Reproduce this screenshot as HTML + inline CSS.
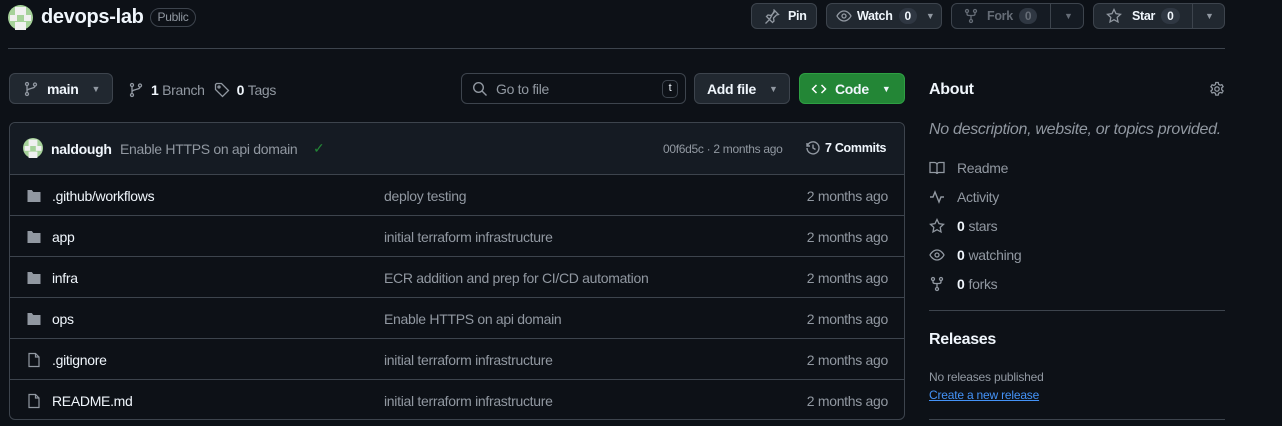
<!DOCTYPE html>
<html><head><meta charset="utf-8"><style>
*{box-sizing:border-box;margin:0;padding:0}
body{width:1282px;height:426px;background:#0d1117;color:#f0f6fc;font-family:"Liberation Sans",sans-serif;font-size:14px;letter-spacing:-0.3px;position:relative;overflow:hidden}
.a{position:absolute;white-space:nowrap}
.btn{position:absolute;background:#212830;border:1px solid #3d444d;border-radius:6px;display:flex;align-items:center;font-weight:bold;font-size:12.5px;color:#f0f6fc}
.cnt{display:inline-block;background:#2f3742;border-radius:10px;padding:1px 6px;font-size:12px;margin-left:6px}
.m{color:#9198a1}
svg{display:block}
.row{position:absolute;left:9px;width:896px;height:41px;border-top:1px solid #3d444d}
.row .n{position:absolute;left:43px;top:13px}
.row .c{position:absolute;left:375px;top:13px;color:#9198a1}
.row .d{position:absolute;right:17px;top:13px;color:#9198a1}
.row .i{position:absolute;left:17px;top:13px}
.side{position:absolute;left:929px;color:#9198a1;display:flex;align-items:center}
.side svg{margin-right:12px}
.side b{color:#f0f6fc;margin-right:4px}
</style></head><body>
<svg class="a" style="left:8px;top:5px" width="25" height="25" viewBox="0 0 25 25"><circle cx="12.5" cy="12.5" r="12.5" fill="#a6d29a"/><rect x="7" y="2" width="11" height="8" fill="#f0f0f0"/><rect x="2" y="10" width="7" height="6" fill="#f0f0f0"/><rect x="16" y="10" width="7" height="6" fill="#f0f0f0"/><rect x="7" y="17" width="11" height="8" fill="#f0f0f0"/></svg>
<div class="a" style="left:41px;top:6px;font-size:20px;font-weight:bold">devops-lab</div>
<div class="a" style="left:150px;top:8px;width:46px;height:19px;border:1px solid #3d444d;border-radius:10px;font-size:12px;color:#9198a1;text-align:center;line-height:17px">Public</div>

<div class="btn" style="left:751px;top:3px;width:66px;height:26px;padding-left:12px"><svg width="16" height="16" viewBox="0 0 16 16" fill="none" stroke="#9198a1" stroke-width="1.3"><path d="M9.5 1.5l5 5-2 .5-3 3 .5 3-1.5 1.5-3-3-4 4M5.5 11.5l-3-3L4 7l3 .5 3-3 .5-2z"/></svg><span style="margin-left:8px">Pin</span></div>
<div class="btn" style="left:826px;top:3px;width:116px;height:26px;padding-left:9px"><svg width="16" height="16" viewBox="0 0 16 16" fill="none" stroke="#9198a1" stroke-width="1.3"><path d="M1 8s2.5-5 7-5 7 5 7 5-2.5 5-7 5-7-5-7-5z"/><circle cx="8" cy="8" r="2"/></svg><span style="margin-left:5px">Watch</span><span class="cnt">0</span><span style="margin-left:9px;color:#9198a1;font-size:9px">▼</span></div>
<div class="btn" style="left:951px;top:3px;width:133px;height:26px;padding-left:11px;color:#656c76;background:#151b23"><svg width="16" height="16" viewBox="0 0 16 16" fill="none" stroke="#656c76" stroke-width="1.3"><circle cx="4" cy="3" r="1.5"/><circle cx="12" cy="3" r="1.5"/><circle cx="8" cy="13" r="1.5"/><path d="M4 4.5v1.5c0 1 1 1.5 2 1.5h4c1 0 2-.5 2-1.5V4.5M8 7.5v4"/></svg><span style="margin-left:8px">Fork</span><span class="cnt" style="color:#656c76">0</span><span style="position:absolute;left:98px;top:0;height:24px;border-left:1px solid #3d444d"></span><span style="position:absolute;left:112px;font-size:9px">▼</span></div>
<div class="btn" style="left:1093px;top:3px;width:132px;height:26px;padding-left:12px"><svg width="16" height="16" viewBox="0 0 16 16" fill="none" stroke="#9198a1" stroke-width="1.3"><path d="M8 1.5l2 4.2 4.5.6-3.3 3.1.8 4.5L8 11.7l-4 2.2.8-4.5L1.5 6.3l4.5-.6z"/></svg><span style="margin-left:10px">Star</span><span class="cnt">0</span><span style="position:absolute;left:98px;top:0;height:24px;border-left:1px solid #3d444d"></span><span style="position:absolute;left:111px;color:#9198a1;font-size:9px">▼</span></div>

<div class="a" style="left:8px;top:48px;width:1217px;height:1px;background:#3d444d"></div>

<div class="btn" style="left:9px;top:73px;width:104px;height:31px;padding-left:13px;font-size:14px"><svg width="16" height="16" viewBox="0 0 16 16" fill="none" stroke="#9198a1" stroke-width="1.3"><circle cx="4" cy="3" r="1.5"/><circle cx="12" cy="3.5" r="1.5"/><circle cx="4" cy="13" r="1.5"/><path d="M4 4.5v7M12 5c0 3-8 2-8 5"/></svg><span style="margin-left:8px">main</span><span style="margin-left:13px;color:#9198a1;font-size:9px">▼</span></div>
<div class="a" style="left:128px;top:82px;display:flex;align-items:center;color:#9198a1"><svg width="16" height="16" viewBox="0 0 16 16" fill="none" stroke="#9198a1" stroke-width="1.3"><circle cx="4" cy="3" r="1.5"/><circle cx="12" cy="3.5" r="1.5"/><circle cx="4" cy="13" r="1.5"/><path d="M4 4.5v7M12 5c0 3-8 2-8 5"/></svg><b style="color:#f0f6fc;margin-left:7px">1</b>&nbsp;Branch<svg style="margin-left:9px" width="16" height="16" viewBox="0 0 16 16" fill="none" stroke="#9198a1" stroke-width="1.3"><path d="M1.5 2.5v5l7 7 6-6-7-7h-5z"/><circle cx="5" cy="5" r="1"/></svg><b style="color:#f0f6fc;margin-left:7px">0</b>&nbsp;Tags</div>

<div class="a" style="left:461px;top:73px;width:225px;height:31px;border:1px solid #3d444d;border-radius:6px;display:flex;align-items:center;padding-left:10px;color:#9198a1"><svg width="16" height="16" viewBox="0 0 16 16" fill="none" stroke="#9198a1" stroke-width="1.4"><circle cx="6.5" cy="6.5" r="4.8"/><path d="M10 10l4.5 4.5"/></svg><span style="margin-left:8px">Go to file</span><span style="position:absolute;right:7px;top:6px;width:16px;height:18px;border:1px solid #3d444d;border-radius:5px;font-size:11px;text-align:center;line-height:15px;color:#f0f6fc">t</span></div>
<div class="btn" style="left:694px;top:73px;width:96px;height:31px;padding-left:12px;font-size:14px">Add file<span style="margin-left:13px;color:#9198a1;font-size:9px">▼</span></div>
<div class="btn" style="left:799px;top:73px;width:106px;height:31px;padding-left:11px;font-size:14px;background:#238636;border-color:#2ea043"><svg width="16" height="16" viewBox="0 0 16 16" fill="none" stroke="#fff" stroke-width="1.5"><path d="M5.5 4L1.5 8l4 4M10.5 4l4 4-4 4"/></svg><span style="margin-left:8px">Code</span><span style="margin-left:13px;font-size:9px">▼</span></div>

<div class="a" style="left:9px;top:122px;width:896px;height:298px;border:1px solid #3d444d;border-radius:6px"></div>
<div class="a" style="left:10px;top:123px;width:894px;height:51px;background:#151b23;border-radius:6px 6px 0 0"></div>
<svg class="a" style="left:23px;top:138px" width="20" height="20" viewBox="0 0 25 25"><circle cx="12.5" cy="12.5" r="12.5" fill="#a6d29a"/><rect x="7" y="2" width="11" height="8" fill="#f0f0f0"/><rect x="2" y="10" width="7" height="6" fill="#f0f0f0"/><rect x="16" y="10" width="7" height="6" fill="#f0f0f0"/><rect x="7" y="17" width="11" height="8" fill="#f0f0f0"/></svg>
<div class="a" style="left:51px;top:141px;font-weight:bold">naldough</div>
<div class="a m" style="left:120px;top:141px">Enable HTTPS on api domain</div>
<div class="a" style="left:313px;top:140px;color:#238636">✓</div>
<div class="a m" style="left:663px;top:142px;font-size:12px">00f6d5c · 2 months ago</div>
<div class="a" style="left:805px;top:140px;display:flex;align-items:center;font-weight:bold;font-size:12.5px"><svg width="16" height="16" viewBox="0 0 16 16" fill="none" stroke="#9198a1" stroke-width="1.4"><path d="M2 3v3h3"/><path d="M2.3 6A6 6 0 1 1 2 8"/><path d="M8 4.5V8l2.5 1.5"/></svg><span style="margin-left:4px">7 Commits</span></div>

<div class="row" style="top:174px"><svg class="i" width="16" height="16" viewBox="0 0 16 16"><path fill="#9198a1" d="M1.5 2h4.3l1.5 2h7.2v10h-13z"/></svg><span class="n">.github/workflows</span><span class="c">deploy testing</span><span class="d">2 months ago</span></div>
<div class="row" style="top:215px"><svg class="i" width="16" height="16" viewBox="0 0 16 16"><path fill="#9198a1" d="M1.5 2h4.3l1.5 2h7.2v10h-13z"/></svg><span class="n">app</span><span class="c">initial terraform infrastructure</span><span class="d">2 months ago</span></div>
<div class="row" style="top:256px"><svg class="i" width="16" height="16" viewBox="0 0 16 16"><path fill="#9198a1" d="M1.5 2h4.3l1.5 2h7.2v10h-13z"/></svg><span class="n">infra</span><span class="c">ECR addition and prep for CI/CD automation</span><span class="d">2 months ago</span></div>
<div class="row" style="top:297px"><svg class="i" width="16" height="16" viewBox="0 0 16 16"><path fill="#9198a1" d="M1.5 2h4.3l1.5 2h7.2v10h-13z"/></svg><span class="n">ops</span><span class="c">Enable HTTPS on api domain</span><span class="d">2 months ago</span></div>
<div class="row" style="top:338px"><svg class="i" width="16" height="16" viewBox="0 0 16 16" fill="none" stroke="#9198a1" stroke-width="1.2"><path d="M3 1.5h6.5l3.5 3.5v9.5H3z M9.5 1.5V5H13"/></svg><span class="n">.gitignore</span><span class="c">initial terraform infrastructure</span><span class="d">2 months ago</span></div>
<div class="row" style="top:379px"><svg class="i" width="16" height="16" viewBox="0 0 16 16" fill="none" stroke="#9198a1" stroke-width="1.2"><path d="M3 1.5h6.5l3.5 3.5v9.5H3z M9.5 1.5V5H13"/></svg><span class="n">README.md</span><span class="c">initial terraform infrastructure</span><span class="d">2 months ago</span></div>

<div class="a" style="left:929px;top:81px;font-size:16px;font-weight:bold">About</div>
<svg class="a" style="left:1209px;top:81px" width="16" height="16" viewBox="0 0 16 16" fill="none" stroke="#9198a1" stroke-width="1.3"><circle cx="8" cy="8" r="2.2"/><path d="M6.8 1.5h2.4l.4 1.8 1.5.9 1.8-.6 1.2 2-1.4 1.3v1.8l1.4 1.3-1.2 2-1.8-.6-1.5.9-.4 1.8H6.8l-.4-1.8-1.5-.9-1.8.6-1.2-2 1.4-1.3V7.1L1.9 5.8l1.2-2 1.8.6 1.5-.9z"/></svg>
<div class="a m" style="left:929px;top:121px;font-size:16px;font-style:italic">No description, website, or topics provided.</div>
<div class="side" style="top:160px"><svg width="16" height="16" viewBox="0 0 16 16" fill="none" stroke="#9198a1" stroke-width="1.3"><path d="M1 2.5h4.5c1.5 0 2.5 1 2.5 2.5v9c0-1-1-1.5-2-1.5H1zM15 2.5h-4.5C9 2.5 8 3.5 8 5v9c0-1 1-1.5 2-1.5h5z"/></svg>Readme</div>
<div class="side" style="top:189px"><svg width="16" height="16" viewBox="0 0 16 16" fill="none" stroke="#9198a1" stroke-width="1.4"><path d="M1 8h3l2-5 4 10 2-5h3"/></svg>Activity</div>
<div class="side" style="top:218px"><svg width="16" height="16" viewBox="0 0 16 16" fill="none" stroke="#9198a1" stroke-width="1.3"><path d="M8 1.5l2 4.2 4.5.6-3.3 3.1.8 4.5L8 11.7l-4 2.2.8-4.5L1.5 6.3l4.5-.6z"/></svg><b>0</b>stars</div>
<div class="side" style="top:247px"><svg width="16" height="16" viewBox="0 0 16 16" fill="none" stroke="#9198a1" stroke-width="1.3"><path d="M1 8s2.5-5 7-5 7 5 7 5-2.5 5-7 5-7-5-7-5z"/><circle cx="8" cy="8" r="2"/></svg><b>0</b>watching</div>
<div class="side" style="top:276px"><svg width="16" height="16" viewBox="0 0 16 16" fill="none" stroke="#9198a1" stroke-width="1.3"><circle cx="4" cy="3" r="1.5"/><circle cx="12" cy="3" r="1.5"/><circle cx="8" cy="13" r="1.5"/><path d="M4 4.5v1.5c0 1 1 1.5 2 1.5h4c1 0 2-.5 2-1.5V4.5M8 7.5v4"/></svg><b>0</b>forks</div>
<div class="a" style="left:929px;top:310px;width:296px;height:1px;background:#3d444d"></div>
<div class="a" style="left:929px;top:331px;font-size:16px;font-weight:bold">Releases</div>
<div class="a m" style="left:929px;top:370px;font-size:12px;letter-spacing:-0.2px">No releases published</div>
<div class="a" style="left:929px;top:388px;font-size:12px;color:#4493f8;text-decoration:underline;letter-spacing:-0.2px">Create a new release</div>
<div class="a" style="left:929px;top:419px;width:296px;height:1px;background:#3d444d"></div>
</body></html>
